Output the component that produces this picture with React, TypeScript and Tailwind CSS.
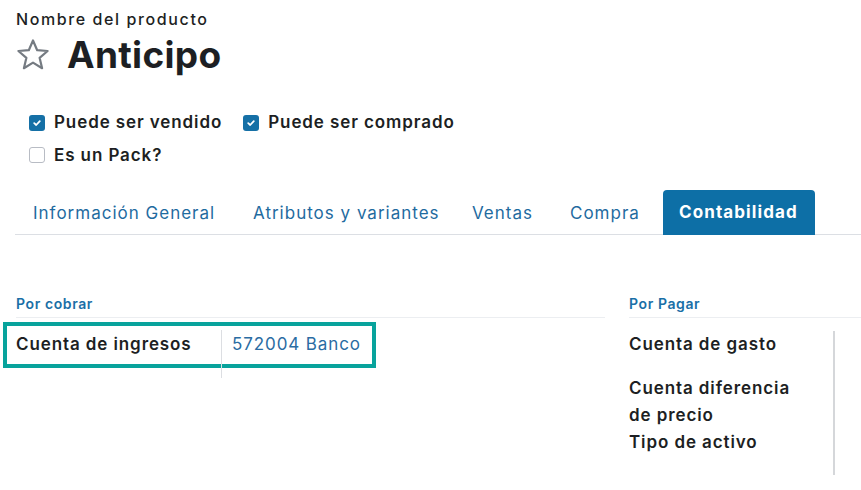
import { useState } from 'react';

const font = { fontFamily: 'Inter, "Noto Sans", sans-serif' };

const tabs = [
  { label: 'Información General', w: 'w-[222px]' },
  { label: 'Atributos y variantes', w: 'w-[219px]' },
  { label: 'Ventas', w: 'w-[98px]' },
  { label: 'Compra', w: 'w-[109px]' },
  { label: 'Contabilidad', w: 'w-[152px]' },
];

const Check = ({ checked, label }: { checked: boolean; label: string }) => (
  <label className="flex items-center gap-[9px]">
    {checked ? (
      <span className="w-[16px] h-[16px] rounded-[3px] bg-[#1570a6] flex items-center justify-center">
        <svg width="10" height="10" viewBox="0 0 10 10">
          <path d="M2.2 5.2 L4.2 7 L7.8 3.2" stroke="white" strokeWidth="1.8" fill="none" strokeLinecap="round" strokeLinejoin="round" />
        </svg>
      </span>
    ) : (
      <span className="w-[16px] h-[16px] rounded-[3px] border border-[#b8bcc4] bg-white" />
    )}
    <span className="text-[17px] font-semibold tracking-[0.9px] text-[#1d1f23]">{label}</span>
  </label>
);

export default function App() {
  const [active] = useState(4);

  return (
    <div style={font} className="w-[861px] h-[490px] bg-white overflow-hidden text-[#1d1f23]">
      <div className="pl-[16px] pt-[8px]">
        <div className="text-[16px] font-medium leading-[22px] tracking-[1.6px]">Nombre del producto</div>
        <div className="flex items-center gap-[16px] mt-[3px]">
          <svg width="36" height="34" viewBox="0 0 36 34" className="-ml-[1px]">
            <path
              d="M18 2.5 L22.2 12.2 L32.6 13 L24.6 19.8 L27.1 30.2 L18 24.6 L8.9 30.2 L11.4 19.8 L3.4 13 L13.8 12.2 Z"
              fill="none"
              stroke="#757b82"
              strokeWidth="2.2"
              strokeLinejoin="round"
            />
          </svg>
          <h1 className="text-[37px] font-bold leading-[44px] tracking-[0.3px]">Anticipo</h1>
        </div>
      </div>

      <div className="pl-[29px] mt-[33px] flex flex-col gap-[7px]">
        <div className="flex items-center gap-[21px]">
          <Check checked label="Puede ser vendido" />
          <Check checked label="Puede ser comprado" />
        </div>
        <Check checked={false} label="Es un Pack?" />
      </div>

      <div className="ml-[15px] mt-[22px] flex border-b border-[#dcdfe4] h-[45px]">
        {tabs.map((t, i) => (
          <div
            key={t.label}
            className={
              i === active
                ? `${t.w} shrink-0 whitespace-nowrap -mb-[1px] px-[16px] rounded-t-[4px] bg-[#0d6fa6] text-white font-bold text-[17px] tracking-[1.1px] flex items-center`
                : `${t.w} shrink-0 whitespace-nowrap pl-[16px] first:pl-[18px] text-[#1f6b9f] text-[17px] tracking-[1px] flex items-center pt-[3px]`
            }
          >
            {t.label}
          </div>
        ))}
      </div>

      <div className="flex mt-[58px]">
        <div className="w-[605px]">
          <div className="ml-[16px] border-b border-[#eceef1] pb-[3px] text-[14px] font-semibold tracking-[0.6px] text-[#1a6fa7]">Por cobrar</div>
          <div className="flex">
            <div className="ml-[3px] mt-[4px] w-[373px] h-[46px] border-[4px] border-[#08a39c] flex">
              <div className="w-[214px] pl-[9px] pt-[6px] text-[17px] font-semibold tracking-[0.9px]">Cuenta de ingresos</div>
              <div className="relative mt-[4px] pl-[11px] pt-[2px] text-[17px] text-[#2a6ca3] tracking-[0.9px]">
                <span className="absolute left-0 top-0 h-[48px] w-[1px] bg-[#dcdee2]" />
                572004 Banco
              </div>
            </div>
          </div>
        </div>
        <div className="flex-1">
          <div className="ml-[24px] border-b border-[#eceef1] pb-[3px] text-[14px] font-semibold tracking-[0.6px] text-[#1a6fa7]">Por Pagar</div>
          <div className="ml-[24px] mr-[26px] flex border-r-2 border-[#d5d7da] mt-[13px] h-[144px]">
            <div className="flex flex-col text-[17px] font-semibold leading-[27px] tracking-[0.9px]">
              <div>Cuenta de gasto</div>
              <div className="mt-[17px]">Cuenta diferencia</div>
              <div>de precio</div>
              <div>Tipo de activo</div>
            </div>
          </div>
        </div>
      </div>
    </div>
  );
}
